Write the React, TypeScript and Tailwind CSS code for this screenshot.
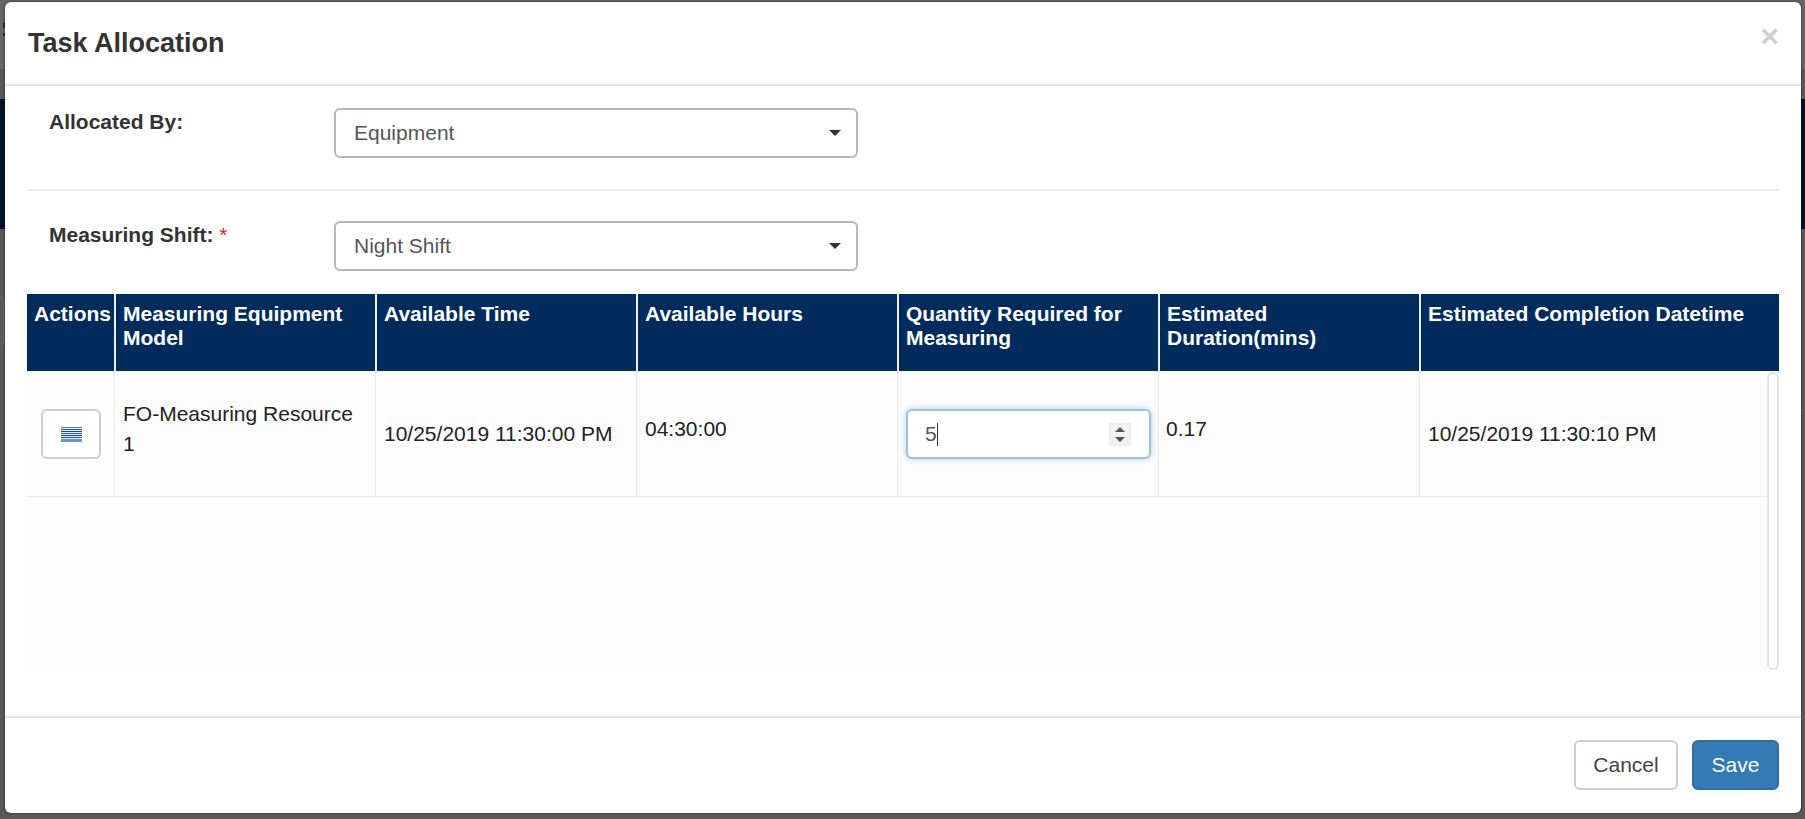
const F = "font-['Liberation_Sans',Arial,sans-serif]";

function Select({ value }: { value: string }) {
  return (
    <div className="w-[524px] h-[50px] flex items-center justify-between pl-[18px] pr-[15px] bg-white border-2 border-[#b8b8b8] rounded-[6px] text-[21px] text-[#555]">
      <span>{value}</span>
      <span className="w-0 h-0 border-x-[6px] border-x-transparent border-t-[6px] border-t-[#333]" />
    </div>
  );
}

const headers = [
  { t: "Actions", w: "w-[89px]", px: "pl-[7px]" },
  { t: "Measuring Equipment Model", w: "w-[261px]", px: "pl-[7px] pr-[8px]" },
  { t: "Available Time", w: "w-[261px]", px: "pl-[7px] pr-[8px]" },
  { t: "Available Hours", w: "w-[261px]", px: "pl-[7px] pr-[8px]" },
  { t: "Quantity Required for Measuring", w: "w-[261px]", px: "pl-[7px] pr-[8px]" },
  { t: "Estimated Duration(mins)", w: "w-[261px]", px: "pl-[7px] pr-[8px]" },
  { t: "Estimated Completion Datetime", w: "flex-1", px: "pl-[7px] pr-[8px]" },
];

export default function App() {
  return (
    <div className={`${F} relative w-[1805px] h-[819px] overflow-hidden bg-[#595959] pl-[5px] pt-[2px]`}>
      <div className="absolute left-0 right-0 top-0 h-[69px] bg-[#666666]" />
      <div className="absolute left-0 right-0 top-[99px] h-[130px] bg-[#00142c]" />
      <div className="absolute left-[-40px] top-[296px] w-[44px] h-[50px] border border-[#6e6e6e] rounded-[6px]" />
      <div className="absolute left-0 right-0 top-[415px] h-px bg-[#505050]" />
      <div className="absolute left-[3px] top-[23px] w-[2px] h-[5px] bg-[#2a2a2a]" />
      <div className="absolute left-[3px] top-[33px] w-[2px] h-[3px] bg-[#2a2a2a]" />
      <div className="relative w-[1796px] h-[811px] bg-white rounded-[6px] flex flex-col shadow-[0_0_3px_rgba(0,0,0,0.6)]">
        <div className="h-[82px] shrink-0 flex items-start justify-between pl-[23px] pr-[22px] pt-[23px]">
          <h4 className="text-[27px] leading-[36px] font-bold text-[#333]">Task Allocation</h4>
          <span className="text-[#cfcfcf] text-[32px] leading-[22px] font-bold">×</span>
        </div>
        <div className="h-[2px] shrink-0 bg-[#e5e5e5]" />

        <div className="flex-1 px-[22px] flex flex-col">
          <div className="flex pt-[22px] h-[105px] border-b-2 border-[#eeeeee]">
            <label className="w-[307px] pl-[22px] pt-[2px] text-[21px] leading-[24px] font-bold text-[#333]">Allocated By:</label>
            <Select value="Equipment" />
          </div>
          <div className="flex pt-[30px] h-[103px]">
            <label className="w-[307px] pl-[22px] pt-[2px] text-[21px] leading-[24px] font-bold text-[#333]">
              Measuring Shift: <span className="text-[#c9302c] font-normal">*</span>
            </label>
            <Select value="Night Shift" />
          </div>

          <div className="flex flex-col h-[376px]">
            <div className="flex h-[77px] shrink-0 bg-[#002b5c] text-white text-[21px] leading-[24px] font-bold">
              {headers.map((h, i) => (
                <div key={h.t} className={`${h.w} ${h.px} pt-[8px] ${i < 6 ? "border-r-2 border-[#eeeeee]" : ""}`}>{h.t}</div>
              ))}
            </div>
            <div className="relative flex-1 bg-[#fdfdfd] text-[21px] leading-[30px] text-[#222]">
              <div className="flex h-[126px] border-b border-[#eaeaea] mr-[12px]">
                <div className="w-[88px] flex border-r border-[#eaeaea] pl-[14px] pt-[38px]">
                  <div className="w-[60px] h-[50px] bg-white border-2 border-[#cccccc] rounded-[6px] flex items-center justify-center">
                    <svg width="21" height="15" viewBox="0 0 21 15">
                      <rect x="0" y="0" width="21" height="15" fill="#dfe8f1" />
                      <rect x="0" y="0" width="21" height="1" fill="#5f86b2" />
                      <rect x="0" y="2" width="21" height="1" fill="#2f5f95" />
                      <rect x="0" y="4" width="21" height="1" fill="#174a84" />
                      <rect x="0" y="6" width="21" height="1" fill="#2f5f95" />
                      <rect x="0" y="8" width="21" height="1" fill="#174a84" />
                      <rect x="0" y="10" width="21" height="1" fill="#2f5f95" />
                      <rect x="0" y="12" width="21" height="3" fill="#6f95bd" />
                    </svg>
                  </div>
                </div>
                <div className="w-[261px] border-r border-[#eaeaea] pl-[8px] pr-[8px] pt-[28px]">FO-Measuring Resource 1</div>
                <div className="w-[261px] border-r border-[#eaeaea] pl-[8px] pt-[48px]">10/25/2019 11:30:00 PM</div>
                <div className="w-[261px] border-r border-[#eaeaea] pl-[8px] pt-[43px]">04:30:00</div>
                <div className="w-[261px] border-r border-[#eaeaea] pl-[8px] pt-[38px]">
                  <div className="w-[245px] h-[50px] bg-white border-2 border-[#a6bfd9] rounded-[6px] shadow-[0_0_6px_rgba(102,175,233,0.6)] flex items-center justify-between pl-[17px] pr-[18px] text-[#555]">
                    <span className="flex items-center">5<span className="inline-block w-px h-[23px] bg-[#333]" /></span>
                    <span className="w-[22px] h-[23px] bg-[#f0f0f0] flex flex-col items-center justify-center gap-[5px]">
                      <span className="w-0 h-0 border-x-[5px] border-x-transparent border-b-[5px] border-b-[#555]" />
                      <span className="w-0 h-0 border-x-[5px] border-x-transparent border-t-[5px] border-t-[#555]" />
                    </span>
                  </div>
                </div>
                <div className="w-[261px] border-r border-[#eaeaea] pl-[7px] pt-[43px]">0.17</div>
                <div className="flex-1 pl-[8px] pt-[48px]">10/25/2019 11:30:10 PM</div>
              </div>
              <div className="absolute right-0 top-[1px] bottom-0 w-[12px] bg-white border-2 border-[#e4e4e4] rounded-[6px]" />
            </div>
          </div>
        </div>

        <div className="h-[2px] shrink-0 bg-[#e5e5e5]" />
        <div className="h-[95px] shrink-0 flex justify-end gap-[14px] pt-[22px] pr-[22px] text-[21px]">
          <button className="w-[104px] h-[50px] bg-white border-2 border-[#cccccc] rounded-[6px] text-[#444]">Cancel</button>
          <button className="w-[87px] h-[50px] bg-[#337ab7] border-2 border-[#2e6da4] rounded-[6px] text-white">Save</button>
        </div>
      </div>
    </div>
  );
}
